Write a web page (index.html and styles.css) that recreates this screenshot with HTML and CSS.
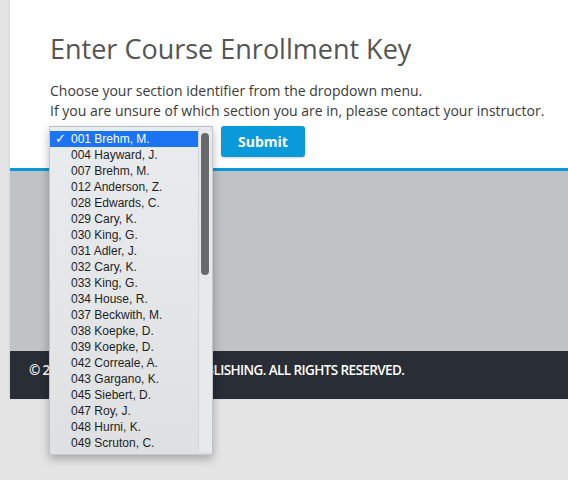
FILE: index.html
```html
<!DOCTYPE html>
<html lang="en">
<head>
<meta charset="utf-8">
<title>Enter Course Enrollment Key</title>
<link rel="stylesheet" href="styles.css">
</head>
<body>
<div class="page">
  <main class="content">
    <h1 class="title">Enter Course Enrollment Key</h1>
    <p class="intro">Choose your section identifier from the dropdown menu.<br>If you are unsure of which section you are in, please contact your instructor.</p>
    <form class="form-row">
      <div class="select-wrap">
        <div class="select-closed"></div>
        <div class="popup">
          <ul class="options">
            <li class="option selected"><span class="check">✓</span>001 Brehm, M.</li>
            <li class="option">004 Hayward, J.</li>
            <li class="option">007 Brehm, M.</li>
            <li class="option">012 Anderson, Z.</li>
            <li class="option">028 Edwards, C.</li>
            <li class="option">029 Cary, K.</li>
            <li class="option">030 King, G.</li>
            <li class="option">031 Adler, J.</li>
            <li class="option">032 Cary, K.</li>
            <li class="option">033 King, G.</li>
            <li class="option">034 House, R.</li>
            <li class="option">037 Beckwith, M.</li>
            <li class="option">038 Koepke, D.</li>
            <li class="option">039 Koepke, D.</li>
            <li class="option">042 Correale, A.</li>
            <li class="option">043 Gargano, K.</li>
            <li class="option">045 Siebert, D.</li>
            <li class="option">047 Roy, J.</li>
            <li class="option">048 Hurni, K.</li>
            <li class="option">049 Scruton, C.</li>
          </ul>
          <div class="scroll-track"><div class="scroll-thumb"></div></div>
        </div>
      </div>
      <button class="submit" type="button">Submit</button>
    </form>
  </main>
  <div class="band"></div>
  <footer class="footer">© 2016 – HAYDEN-MCNEIL PUBLISHING. ALL RIGHTS RESERVED.</footer>
</div>
</body>
</html>
```
FILE: styles.css
```css
html, body {
  margin: 0;
  padding: 0;
}
body {
  background: #e5e5e5;
  font-family: "Open Sans", "Noto Sans", sans-serif;
  height: 480px;
  overflow: hidden;
}
.page {
  margin-left: 10px;
  background: #ffffff;
  box-shadow: -1px 0 2px rgba(0,0,0,0.08);
}
.content {
  padding: 32px 0 11px 40px;
  border-bottom: 3px solid #0b9ad9;
}
.title {
  margin: 0 0 15px 0;
  font-size: 27px;
  line-height: 34px;
  font-weight: 400;
  color: #555555;
}
.intro {
  margin: 0 0 5px 0;
  font-size: 14px;
  line-height: 20px;
  color: #3a3a3a;
  white-space: nowrap;
}
.form-row {
  display: flex;
  align-items: flex-start;
  gap: 8px;
  margin: 0;
}
.select-wrap {
  position: relative;
  width: 163px;
  height: 31px;
}
.select-closed {
  height: 31px;
}
.popup {
  position: absolute;
  left: -1px;
  top: 0;
  width: 162px;
  height: 327px;
  border: 1px solid rgba(0,0,0,0.14);
  background: linear-gradient(#e9ecef, #dfe0e1);
  box-shadow: 0 4px 9px rgba(0,0,0,0.28);
  display: flex;
  z-index: 5;
}
.options {
  list-style: none;
  margin: 0;
  padding: 4px 0 0 0;
  width: 148px;
}
.option {
  position: relative;
  height: 16px;
  line-height: 16px;
  padding-left: 21px;
  font-family: "Liberation Sans", Arial, sans-serif;
  font-size: 12px;
  color: #1e1e1e;
  white-space: nowrap;
}
.option.selected {
  background: #1b74f3;
  color: #ffffff;
}
.check {
  position: absolute;
  left: 5px;
  top: 0;
  font-family: "DejaVu Sans", sans-serif;
  font-size: 13px;
  font-weight: bold;
}
.scroll-track {
  width: 13px;
  margin-top: 1px;
  height: 324px;
  border-left: 1px solid #d2d4d6;
  background: #e7e9ea;
  position: relative;
}
.scroll-thumb {
  position: absolute;
  left: 2px;
  top: 5px;
  width: 8px;
  height: 142px;
  border-radius: 4px;
  background: #67696b;
}
.submit {
  height: 31px;
  padding: 0 17px;
  border: none;
  border-radius: 3px;
  background: #0b9ad9;
  color: #ffffff;
  font-family: "Open Sans", "Noto Sans", sans-serif;
  font-size: 14px;
  font-weight: 700;
  box-shadow: 0 1px 2px rgba(0,0,0,0.18);
}
.band {
  height: 180px;
  background: #bfc3c6;
}
.footer {
  height: 48px;
  background: #282d36;
  color: #ffffff;
  font-family: "Open Sans", "Noto Sans", sans-serif;
  font-size: 13.5px;
  font-weight: 600;
  letter-spacing: -0.6px;
  line-height: 39px;
  padding-left: 19px;
  white-space: nowrap;
}
```
